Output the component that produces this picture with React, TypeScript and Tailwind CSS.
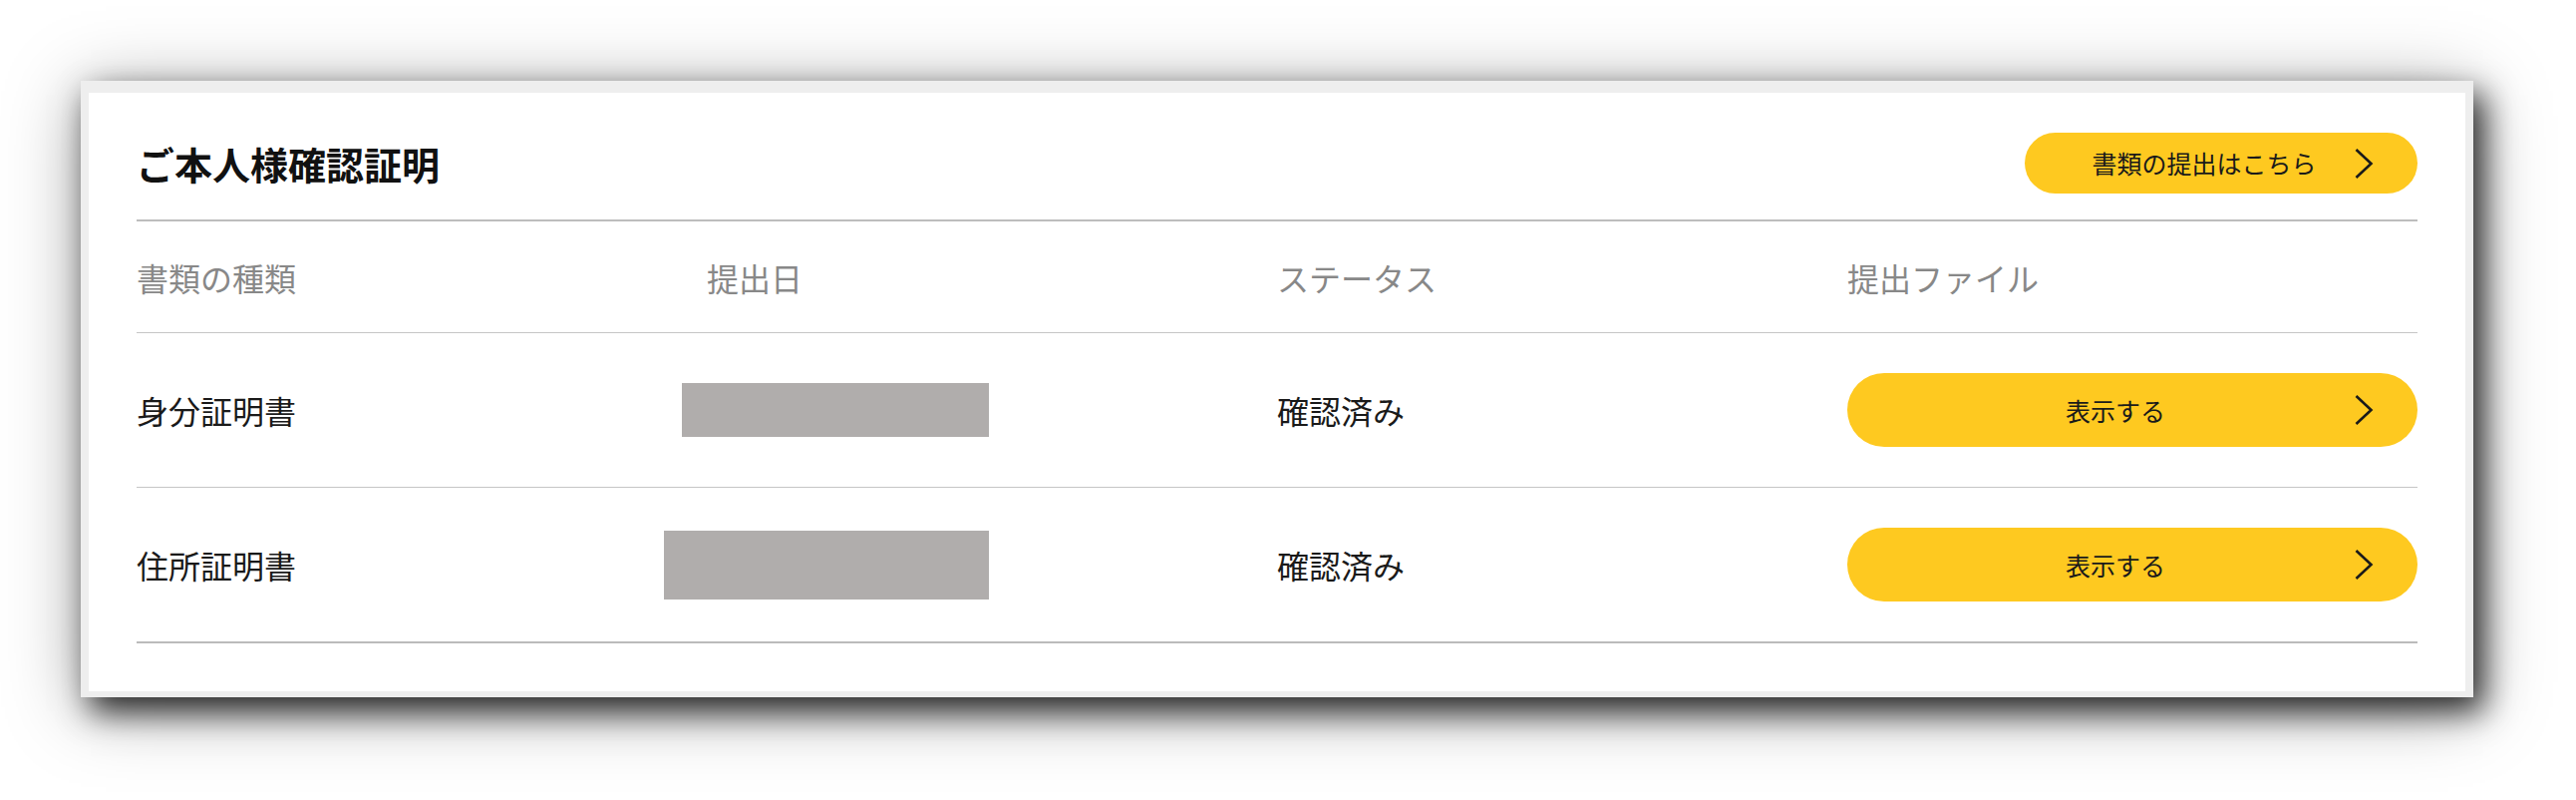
import React from "react";

function Chevron() {
  return (
    <svg
      className="absolute right-[44px] top-1/2 -translate-y-1/2"
      width="20"
      height="31"
      viewBox="0 0 20 31"
      fill="none"
    >
      <path d="M2.5 1.5 L17.5 15.5 L2.5 29.5" stroke="#1a1a1a" strokeWidth="2.6" strokeLinejoin="miter" />
    </svg>
  );
}

function YellowButton({ label, className }: { label: string; className: string }) {
  return (
    <button
      className={
        "relative flex items-center justify-center rounded-full bg-[#fec920] pr-[34px] text-[25px] leading-none text-[#1a1a1a] " +
        className
      }
    >
      <span>{label}</span>
      <Chevron />
    </button>
  );
}

const rows = [
  { name: "身分証明書", box: "ml-[-25px] w-[308px] h-[54px]", status: "確認済み" },
  { name: "住所証明書", box: "ml-[-43px] w-[326px] h-[69px]", status: "確認済み" },
];

export default function App() {
  return (
    <div className="min-h-[802px] w-[2584px] bg-white pl-[81px] pt-[81px] font-['Noto_Sans_CJK_JP','Noto_Sans',sans-serif]">
      <div className="h-[618px] w-[2400px] border-b-[6px] border-l-[8px] border-r-[8px] border-t-[12px] border-[#eeeeee] bg-white shadow-[0_10px_70px_rgba(0,0,0,0.35),10px_14px_30px_rgba(0,0,0,0.8)]">
        <div className="px-[48px]">
          <div className="flex items-center justify-between pb-[26px] pt-[40px]">
            <h1 className="text-[38px] font-bold leading-none text-[#111111]">ご本人様確認証明</h1>
            <YellowButton label="書類の提出はこちら" className="h-[61px] w-[394px]" />
          </div>
          <div className="h-[2px] bg-[#bdbdbd]" />
          <div className="grid h-[112px] grid-cols-4 items-center border-b border-[#c6c6c6] text-[32px] leading-none text-[#888888]">
            <div>書類の種類</div>
            <div>提出日</div>
            <div>ステータス</div>
            <div>提出ファイル</div>
          </div>
          {rows.map((r, i) => (
            <div
              key={r.name}
              className={
                i === rows.length - 1
                  ? "grid h-[156px] grid-cols-4 items-center border-b-2 border-[#bbbbbb] text-[32px] leading-none text-[#1a1a1a]"
                  : "grid h-[155px] grid-cols-4 items-center border-b border-[#c6c6c6] text-[32px] leading-none text-[#1a1a1a]"
              }
            >
              <div>{r.name}</div>
              <div>
                <div className={"bg-[#b0adac] " + r.box} />
              </div>
              <div>{r.status}</div>
              <div>
                <YellowButton label="表示する" className="h-[74px] w-full" />
              </div>
            </div>
          ))}
        </div>
      </div>
    </div>
  );
}
